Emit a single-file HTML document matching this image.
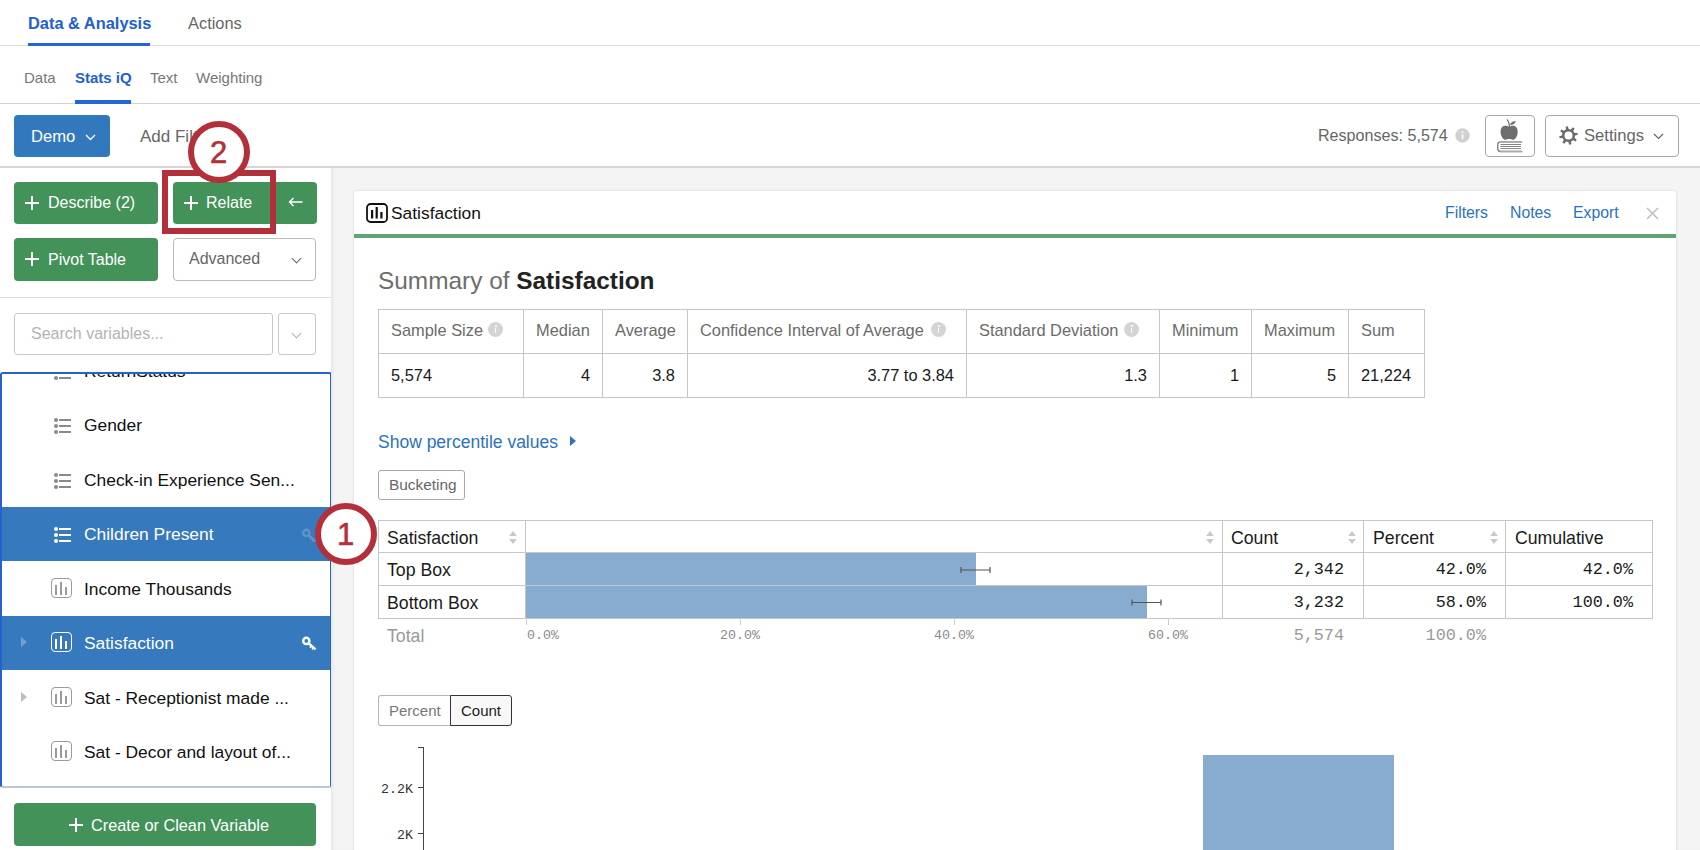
<!DOCTYPE html>
<html><head><meta charset="utf-8">
<style>
*{box-sizing:border-box;margin:0;padding:0}
html,body{width:1700px;height:850px;overflow:hidden;background:#fff;font-family:"Liberation Sans",sans-serif;color:#1a1a1a}
.a{position:absolute;white-space:nowrap}
#nav1{position:absolute;left:0;top:0;width:1700px;height:46px;border-bottom:1px solid #dcdcdc}
#nav2{position:absolute;left:0;top:46px;width:1700px;height:58px;border-bottom:1px solid #d2d2d2}
#tool{position:absolute;left:0;top:104px;width:1700px;height:64px;border-bottom:2px solid #d6d6d6}
#left{position:absolute;left:0;top:168px;width:331px;height:682px;background:#fff}
#main{position:absolute;left:331px;top:168px;width:1369px;height:682px;background:#f4f4f4;box-shadow:inset 4px 0 4px -3px rgba(0,0,0,.08)}
.btn-g{position:absolute;background:#43925a;border-radius:4px;color:#fff;font-size:16px}
.card{position:absolute;left:354px;top:191px;width:1322px;height:700px;background:#fff;border-radius:3px;box-shadow:0 0 3px rgba(0,0,0,.12)}
.plus{width:14px;height:14px}
.plus:before{content:"";position:absolute;left:6px;top:0;width:2px;height:14px;background:#fff}
.plus:after{content:"";position:absolute;left:0;top:6px;width:14px;height:2px;background:#fff}
.chev{width:7px;height:7px;border-right:1.3px solid #666;border-bottom:1.3px solid #666;transform:rotate(45deg)}
#vlist{position:absolute;left:0;top:204px;width:332px;height:416px;border:2px solid #2462cc;border-bottom-color:#bcc6d6;border-radius:3px;overflow:hidden;background:#fff}
.row{position:absolute;left:0;width:331px;height:54px}
.row .t{position:absolute;left:82px;top:17px;font-size:17.4px;color:#111;white-space:nowrap}
.row.sel{background:#3679bd}
.row.sel .t{color:#fff}
.ic-list{position:absolute;left:52px;top:20px;width:20px;height:16px}
.ic-list i{position:absolute;left:0;width:18px;height:4px}
.ic-list i:nth-child(1){top:0}.ic-list i:nth-child(2){top:6px}.ic-list i:nth-child(3){top:12px}
.ic-list i:before{content:"";position:absolute;left:0;top:0;width:4px;height:4px;border-radius:50%;background:#8a8a8a}
.ic-list i:after{content:"";position:absolute;left:5px;top:1px;width:12px;height:2px;background:#8a8a8a}
.sel .ic-list i:before,.sel .ic-list i:after{background:#fff}
.ic-bar{position:absolute;left:49px;top:16px;width:21px;height:20px;border:1.5px solid #9a9a9a;border-radius:4px}
.ic-bar i{position:absolute;width:2.2px;bottom:2.5px;background:#9a9a9a}
.ic-bar i:nth-child(1){left:3.3px;height:10px}.ic-bar i:nth-child(2){left:7.8px;height:13px}.ic-bar i:nth-child(3){left:12.5px;height:7.5px}
.sel .ic-bar{border-color:#fff}.sel .ic-bar i{background:#fff}
.tri{position:absolute;left:19px;top:21px;width:0;height:0;border-left:6px solid #bdbdbd;border-top:5px solid transparent;border-bottom:5px solid transparent}
.sel .tri{border-left-color:rgba(255,255,255,.3)}
.lnk{font-size:15.8px;color:#2a72bd}
.hl{height:1px;background:#c6c6c6}
.vl{width:1px;background:#c6c6c6}
.th{top:321px;font-size:16.4px;color:#6b6b6b}
.td{top:366px;font-size:16.4px;color:#1a1a1a}
.r{text-align:right}
.info{width:15px;height:15px;border-radius:50%;background:#d4d4d4}
.info:before{content:"";position:absolute;left:6.8px;top:6.2px;width:1.5px;height:5px;background:#fff}
.info:after{content:"";position:absolute;left:6.5px;top:3px;width:2px;height:2px;border-radius:50%;background:#fff}
.ft{font-size:17.7px;color:#1a1a1a;margin-top:1px}
.sort{width:10px;height:14px}
.sort:before{content:"";position:absolute;left:0;top:0;border-bottom:5.5px solid #c9c9c9;border-left:4.8px solid transparent;border-right:4.8px solid transparent}
.sort:after{content:"";position:absolute;left:0;top:8px;border-top:5.5px solid #c9c9c9;border-left:4.8px solid transparent;border-right:4.8px solid transparent}
.mono{font-family:"Liberation Mono",monospace;font-size:16.8px;color:#1a1a1a;margin-top:1px}
.tick{top:618px;width:1.3px;height:7px;background:#ccc}
.ax{top:628px;font-family:"Liberation Mono",monospace;font-size:13.3px;color:#8a8a8a}
.ax2{font-family:"Liberation Mono",monospace;font-size:13.3px;color:#333}
</style></head><body>
<div id="nav1">
  <div class="a" style="left:28px;top:14px;font-size:16.4px;font-weight:bold;color:#2160d0">Data &amp; Analysis</div>
  <div class="a" style="left:28px;top:43px;width:122px;height:3px;background:#2566d6"></div>
  <div class="a" style="left:188px;top:14px;font-size:16.4px;color:#666">Actions</div>
</div>
<div id="nav2">
  <div class="a" style="left:24px;top:23px;font-size:15px;color:#777">Data</div>
  <div class="a" style="left:75px;top:23px;font-size:15px;font-weight:bold;color:#2160d0">Stats iQ</div>
  <div class="a" style="left:75px;top:54px;width:56px;height:4px;background:#2566d6"></div>
  <div class="a" style="left:150px;top:23px;font-size:15px;color:#777">Text</div>
  <div class="a" style="left:196px;top:23px;font-size:15px;color:#777">Weighting</div>
</div>
<div id="tool">
  <div class="a" style="left:14px;top:11px;width:96px;height:42px;background:#3278bd;border-radius:4px"></div>
  <div class="a" style="left:31px;top:23px;font-size:16.6px;color:#fff">Demo</div>
  <div class="a" style="left:140px;top:23px;font-size:17px;color:#666">Add Filter</div>
  <svg class="a" style="left:85px;top:30px" width="11" height="7" viewBox="0 0 11 7"><path d="M1 1L5.5 5.5L10 1" fill="none" stroke="#fff" stroke-width="1.3"/></svg>
  <div class="a" style="left:1318px;top:22px;font-size:16.1px;color:#666">Responses: 5,574</div>
  <svg class="a" style="left:1455px;top:24px" width="15" height="15" viewBox="0 0 15 15"><circle cx="7.5" cy="7.5" r="7.2" fill="#d0d0d0"/><rect x="6.7" y="6.3" width="1.6" height="5" fill="#fff"/><circle cx="7.5" cy="4.2" r="1" fill="#fff"/></svg>
  <div class="a" style="left:1485px;top:11px;width:50px;height:42px;border:1px solid #a8a8a8;border-radius:4px"></div>
  <svg class="a" style="left:1485px;top:11px" width="50" height="42" viewBox="0 0 50 42">
    <path d="M24.2 11.9C21.4 9.7 15.6 9.9 15.6 16.7C15.6 21.2 18.3 24.8 20.6 24.8C22 24.8 22.8 24.1 24.2 24.1C25.6 24.1 26.4 24.8 27.8 24.8C30.1 24.8 32.7 21.2 32.7 16.7C32.7 9.9 27 9.7 24.2 11.9Z" fill="#6e6e6e"/>
    <path d="M21.9 4.4C23.3 5.8 24.3 8.5 24.4 12.2" fill="none" stroke="#6e6e6e" stroke-width="1.2"/>
    <path d="M24.9 10.1C25.6 7.2 28.2 5.8 30.9 6.3C30 8.8 27.6 10.3 24.9 10.1Z" fill="#6e6e6e"/>
    <path d="M37.2 26.9H15.6C13.8 26.9 12.7 28.2 12.7 30V33.5C12.7 35.3 13.8 36.5 15.6 36.5H37.2" fill="none" stroke="#7a7a7a" stroke-width="1.3"/>
    <rect x="15.2" y="26.3" width="22" height="1.2" fill="#a9a9a9"/><rect x="15.2" y="35.9" width="22" height="1.2" fill="#a9a9a9"/>
    <path d="M15.5 29.5H36M15.5 31.5H36M15.5 33.6H36" stroke="#757575" stroke-width="0.9"/>
  </svg>
  <div class="a" style="left:1545px;top:11px;width:134px;height:42px;border:1px solid #a8a8a8;border-radius:4px"></div>
  <svg class="a" style="left:1558px;top:21px" width="21" height="21" viewBox="-10.5 -10.5 21 21"><path d="M-2.58 -6.08 L-2.87 -8.84 L-0.65 -9.28 L0.12 -6.60 L2.47 -6.12 L4.22 -8.29 L6.10 -7.02 L4.75 -4.58 L6.08 -2.58 L8.84 -2.87 L9.28 -0.65 L6.60 0.12 L6.12 2.47 L8.29 4.22 L7.02 6.10 L4.58 4.75 L2.58 6.08 L2.87 8.84 L0.65 9.28 L-0.12 6.60 L-2.47 6.12 L-4.22 8.29 L-6.10 7.02 L-4.75 4.58 L-6.08 2.58 L-8.84 2.87 L-9.28 0.65 L-6.60 -0.12 L-6.12 -2.47 L-8.29 -4.22 L-7.02 -6.10 L-4.58 -4.75Z M4.0 0 A4.0 4.0 0 1 0 -4.0 0 A4.0 4.0 0 1 0 4.0 0Z" fill="#6b6b6b" fill-rule="evenodd"/></svg>
  <div class="a" style="left:1584px;top:22px;font-size:16.6px;color:#666">Settings</div>
  <svg class="a" style="left:1653px;top:29px" width="11" height="7" viewBox="0 0 11 7"><path d="M1 1L5.5 5.5L10 1" fill="none" stroke="#666" stroke-width="1.2"/></svg>
</div>
<div id="left">
  <div class="btn-g" style="left:14px;top:14px;width:144px;height:42px"></div>
  <div class="a plus" style="left:25px;top:28px"></div>
  <div class="a" style="left:48px;top:26px;font-size:16px;color:#fff">Describe (2)</div>
  <div class="btn-g" style="left:173px;top:14px;width:144px;height:42px"></div>
  <div class="a plus" style="left:184px;top:28px"></div>
  <div class="a" style="left:206px;top:26px;font-size:16px;color:#fff">Relate</div>
  <svg class="a" style="left:288px;top:29px" width="15" height="10" viewBox="0 0 15 10"><path d="M14.5 5H1.5M5.5 1L1.5 5L5.5 9" fill="none" stroke="#fff" stroke-width="1.3"/></svg>
  <div class="btn-g" style="left:14px;top:70px;width:144px;height:43px"></div>
  <div class="a plus" style="left:25px;top:84px"></div>
  <div class="a" style="left:48px;top:83px;font-size:16px;color:#fff">Pivot Table</div>
  <div class="a" style="left:173px;top:70px;width:143px;height:43px;border:1px solid #b9b9b9;border-radius:4px"></div>
  <div class="a" style="left:189px;top:82px;font-size:16px;color:#666">Advanced</div>
  <div class="a chev" style="left:293px;top:87px;border-color:#666"></div>
  <div class="a" style="left:0;top:129px;width:331px;height:1px;background:#dcdcdc"></div>
  <div class="a" style="left:14px;top:145px;width:259px;height:42px;border:1px solid #c8c8c8;border-radius:3px"></div>
  <div class="a" style="left:31px;top:157px;font-size:16px;color:#b4b4b4">Search variables...</div>
  <div class="a" style="left:278px;top:145px;width:38px;height:42px;border:1px solid #c8c8c8;border-radius:3px"></div>
  <div class="a chev" style="left:293px;top:162px;border-color:#b0b0b0"></div>
  <div id="vlist">
    <div class="row" style="top:-30px"><span class="ic-list"><i></i><i></i><i></i></span><span class="t">ReturnStatus</span></div>
    <div class="row" style="top:24px"><span class="ic-list"><i></i><i></i><i></i></span><span class="t">Gender</span></div>
    <div class="row" style="top:79px"><span class="ic-list"><i></i><i></i><i></i></span><span class="t">Check-in Experience Sen...</span></div>
    <div class="row sel" style="top:133px"><span class="ic-list"><i></i><i></i><i></i></span><span class="t">Children Present</span></div>
    <div class="row" style="top:188px"><span class="ic-bar"><i></i><i></i><i></i></span><span class="t">Income Thousands</span></div>
    <div class="row sel" style="top:242px"><span class="tri"></span><span class="ic-bar"><i></i><i></i><i></i></span><span class="t">Satisfaction</span></div>
    <div class="row" style="top:297px"><span class="tri"></span><span class="ic-bar"><i></i><i></i><i></i></span><span class="t">Sat - Receptionist made ...</span></div>
    <div class="row" style="top:351px"><span class="ic-bar"><i></i><i></i><i></i></span><span class="t">Sat - Decor and layout of...</span></div>
  </div>
  <div class="btn-g" style="left:14px;top:635px;width:302px;height:43px"></div>
  <div class="a plus" style="left:69px;top:650px"></div>
  <div class="a" style="left:91px;top:648px;font-size:16.3px;color:#fff">Create or Clean Variable</div>
</div>
<div id="main"></div>
<div class="card"></div>
<div id="cc">
  <svg class="a" style="left:366px;top:203px" width="22" height="20" viewBox="0 0 22 20"><rect x="1" y="1" width="20" height="18" rx="3.5" fill="none" stroke="#111" stroke-width="1.8"/><rect x="5" y="7" width="2.2" height="8.5" fill="#111"/><rect x="9.6" y="4" width="2.2" height="11.5" fill="#111"/><rect x="14.3" y="9" width="2.2" height="6.5" fill="#111"/></svg>
  <div class="a" style="left:391px;top:203px;font-size:17.4px;color:#111">Satisfaction</div>
  <div class="a lnk" style="left:1445px;top:204px">Filters</div>
  <div class="a lnk" style="left:1510px;top:204px">Notes</div>
  <div class="a lnk" style="left:1573px;top:204px">Export</div>
  <svg class="a" style="left:1646px;top:207px" width="13" height="13" viewBox="0 0 13 13"><path d="M1 1L12 12M12 1L1 12" stroke="#bdbdbd" stroke-width="1.5"/></svg>
  <div class="a" style="left:354px;top:234px;width:1322px;height:4px;background:#5fa472"></div>
  <div class="a" style="left:378px;top:267px;font-size:24.4px;color:#6d6d6d">Summary of <b style="color:#222">Satisfaction</b></div>
  <!-- summary table -->
  <div class="a" style="left:378px;top:309px;width:1047px;height:89px;border:1px solid #c6c6c6"></div>
  <div class="a hl" style="left:378px;top:353px;width:1047px"></div>
  <div class="a vl" style="left:523px;top:309px;height:89px"></div>
  <div class="a vl" style="left:602px;top:309px;height:89px"></div>
  <div class="a vl" style="left:687px;top:309px;height:89px"></div>
  <div class="a vl" style="left:966px;top:309px;height:89px"></div>
  <div class="a vl" style="left:1159px;top:309px;height:89px"></div>
  <div class="a vl" style="left:1251px;top:309px;height:89px"></div>
  <div class="a vl" style="left:1348px;top:309px;height:89px"></div>
  <div class="a th" style="left:391px">Sample Size</div><span class="a info" style="left:488px;top:322px"></span>
  <div class="a th" style="left:536px">Median</div>
  <div class="a th" style="left:615px">Average</div>
  <div class="a th" style="left:700px">Confidence Interval of Average</div><span class="a info" style="left:931px;top:322px"></span>
  <div class="a th" style="left:979px">Standard Deviation</div><span class="a info" style="left:1124px;top:322px"></span>
  <div class="a th" style="left:1172px">Minimum</div>
  <div class="a th" style="left:1264px">Maximum</div>
  <div class="a th" style="left:1361px">Sum</div>
  <div class="a td" style="left:391px">5,574</div>
  <div class="a td r" style="right:1110px">4</div>
  <div class="a td r" style="right:1025px">3.8</div>
  <div class="a td r" style="right:746px">3.77 to 3.84</div>
  <div class="a td r" style="right:553px">1.3</div>
  <div class="a td r" style="right:461px">1</div>
  <div class="a td r" style="right:364px">5</div>
  <div class="a td" style="left:1361px">21,224</div>
  <div class="a" style="left:378px;top:432px;font-size:17.5px;color:#2a72bd">Show percentile values</div>
  <div class="a" style="left:570px;top:436px;width:0;height:0;border-left:6.5px solid #2a72bd;border-top:5.2px solid transparent;border-bottom:5.2px solid transparent"></div>
  <div class="a" style="left:378px;top:470px;width:87px;height:30px;border:1.3px solid #a9a9a9;border-radius:3px"></div>
  <div class="a" style="left:389px;top:476px;font-size:15.4px;color:#666">Bucketing</div>
  <!-- frequency table -->
  <div class="a" style="left:526px;top:553px;width:450px;height:32px;background:#88abd0"></div>
  <div class="a" style="left:526px;top:586px;width:621px;height:32px;background:#88abd0"></div>
  <div class="a" style="left:378px;top:520px;width:1275px;height:99px;border:1px solid #c6c6c6;border-bottom:0"></div>
  <div class="a hl" style="left:378px;top:552px;width:1275px"></div>
  <div class="a hl" style="left:378px;top:585px;width:1275px"></div>
  <div class="a hl" style="left:378px;top:618px;width:1275px"></div>
  <div class="a vl" style="left:525px;top:520px;height:99px"></div>
  <div class="a vl" style="left:1222px;top:520px;height:99px"></div>
  <div class="a vl" style="left:1363px;top:520px;height:99px"></div>
  <div class="a vl" style="left:1505px;top:520px;height:99px"></div>
  <div class="a ft" style="left:387px;top:527px">Satisfaction</div>
  <div class="a ft" style="left:387px;top:559px">Top Box</div>
  <div class="a ft" style="left:387px;top:592px">Bottom Box</div>
  <div class="a ft" style="left:1231px;top:527px">Count</div>
  <div class="a ft" style="left:1373px;top:527px">Percent</div>
  <div class="a ft" style="left:1515px;top:527px">Cumulative</div>
  <div class="a ft" style="left:387px;top:625px;color:#999">Total</div>
  <span class="a sort" style="left:509px;top:531px"></span>
  <span class="a sort" style="left:1206px;top:531px"></span>
  <span class="a sort" style="left:1348px;top:531px"></span>
  <span class="a sort" style="left:1490px;top:531px"></span>
  <div class="a mono r" style="right:356px;top:559px">2,342</div>
  <div class="a mono r" style="right:356px;top:592px">3,232</div>
  <div class="a mono r" style="right:356px;top:625px;color:#999">5,574</div>
  <div class="a mono r" style="right:214px;top:559px">42.0%</div>
  <div class="a mono r" style="right:214px;top:592px">58.0%</div>
  <div class="a mono r" style="right:214px;top:625px;color:#999">100.0%</div>
  <div class="a mono r" style="right:67px;top:559px">42.0%</div>
  <div class="a mono r" style="right:67px;top:592px">100.0%</div>
  <svg class="a" style="left:950px;top:560px" width="50" height="50" viewBox="0 0 50 50"><path d="M11 10H40M11 7V13M40 7V13" stroke="#555" stroke-width="1.2" fill="none"/></svg>
  <svg class="a" style="left:1120px;top:593px" width="50" height="50" viewBox="0 0 50 50"><path d="M12 9.5H41M12 6.5V12.5M41 6.5V12.5" stroke="#555" stroke-width="1.2" fill="none"/></svg>
  <div class="a tick" style="left:525.5px"></div><div class="a tick" style="left:740px"></div><div class="a tick" style="left:954px"></div><div class="a tick" style="left:1168px"></div>
  <div class="a ax" style="left:527px">0.0%</div>
  <div class="a ax" style="left:720px">20.0%</div>
  <div class="a ax" style="left:934px">40.0%</div>
  <div class="a ax" style="left:1148px">60.0%</div>
  <!-- chart -->
  <div class="a" style="left:378px;top:695px;width:73px;height:31px;border:1.3px solid #b5b5b5;border-right:0;border-radius:3px 0 0 3px"></div>
  <div class="a" style="left:389px;top:702px;font-size:15px;color:#777">Percent</div>
  <div class="a" style="left:450px;top:695px;width:62px;height:31px;border:1.5px solid #333;border-radius:0 3px 3px 0;background:#f8f8f8"></div>
  <div class="a" style="left:461px;top:702px;font-size:15px;color:#222">Count</div>
  <div class="a" style="left:423px;top:747px;width:1.3px;height:110px;background:#444"></div>
  <div class="a" style="left:418px;top:747px;width:6px;height:1.3px;background:#444"></div>
  <div class="a" style="left:418px;top:787px;width:6px;height:1.3px;background:#444"></div>
  <div class="a" style="left:418px;top:833px;width:6px;height:1.3px;background:#444"></div>
  <div class="a ax2" style="right:1287px;top:782px">2.2K</div>
  <div class="a ax2" style="right:1287px;top:828px">2K</div>
  <div class="a" style="left:1203px;top:755px;width:191px;height:100px;background:#88abd0"></div>
</div>
<svg class="a" style="left:296px;top:631px;opacity:1" width="22" height="22" viewBox="0 0 22 22"><circle cx="10.3" cy="9.9" r="3.1" fill="none" stroke="#fff" stroke-width="2.4"/><path d="M12.4 12.1L19.6 18.3" stroke="#fff" stroke-width="2.4"/><path d="M15.2 15.2L13.9 16.7M17.3 17L16 18.5" stroke="#fff" stroke-width="1.6"/></svg>
<svg class="a" style="left:296px;top:523px;opacity:0.2" width="22" height="22" viewBox="0 0 22 22"><circle cx="10.3" cy="9.9" r="3.1" fill="none" stroke="#fff" stroke-width="2.4"/><path d="M12.4 12.1L19.6 18.3" stroke="#fff" stroke-width="2.4"/><path d="M15.2 15.2L13.9 16.7M17.3 17L16 18.5" stroke="#fff" stroke-width="1.6"/></svg>
<div class="a" style="left:162px;top:170px;width:114px;height:64px;border:6px solid #b3303a"></div>
<div class="a" style="left:188px;top:121px;width:62px;height:62px;border:6px solid #b3303a;border-radius:50%;background:#fff"></div>
<div class="a" style="left:210px;top:135px;font-size:31px;color:#b3303a;-webkit-text-stroke:0.6px #b3303a">2</div>
<div class="a" style="left:315px;top:503px;width:62px;height:62px;border:6px solid #b3303a;border-radius:50%;background:#fff"></div>
<div class="a" style="left:337px;top:517px;font-size:31px;color:#b3303a;-webkit-text-stroke:0.6px #b3303a">1</div>
</body></html>
